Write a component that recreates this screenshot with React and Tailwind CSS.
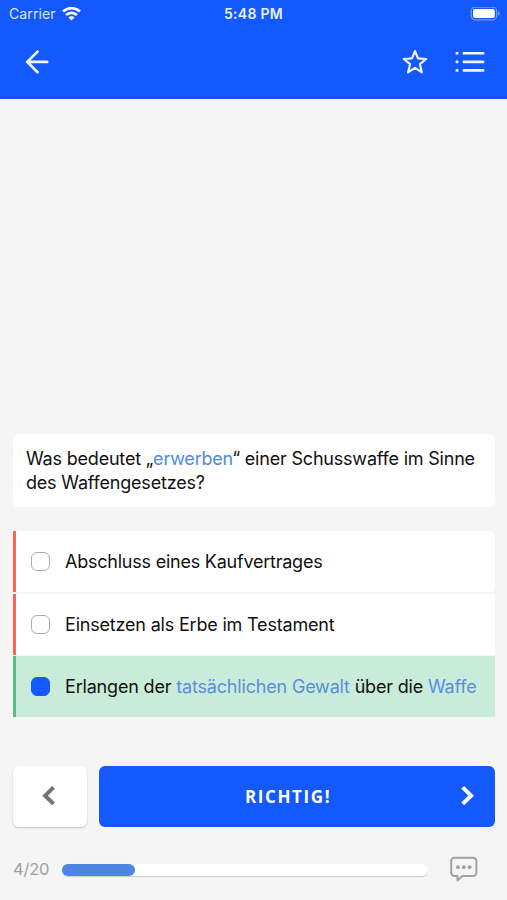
import React from "react";

function StatusBar() {
  return (
    <div className="grid h-[27px] grid-cols-3 items-center pl-[9px] pr-[7px] text-white">
      <div className="flex items-center gap-[6px]">
        <span className="text-[14px] leading-[27px] tracking-[0.1px] text-[#d9e5ff]">Carrier</span>
        <svg width="19" height="14" viewBox="0 0 19 14" fill="none" stroke="currentColor" strokeWidth="2.7">
          <path d="M1 4.6a12.3 12.3 0 0 1 17 0" />
          <path d="M4.1 8a7.8 7.8 0 0 1 10.8 0" />
          <path d="M9.5 13.6 6.5 10.6a4.2 4.2 0 0 1 6 0Z" fill="currentColor" stroke="none" />
        </svg>
      </div>
      <span className="pr-[2px] pt-px text-center text-[14px] font-semibold leading-[26px] tracking-[0.3px] text-[#e8efff]">5:48 PM</span>
      <svg className="justify-self-end" width="30" height="14" viewBox="0 0 30 14">
        <rect x="1.2" y="0.2" width="25.4" height="12.6" rx="3.8" fill="none" stroke="#719cff" strokeWidth="1.2" />
        <rect x="3" y="2" width="21.8" height="9" rx="2" fill="#fff" />
        <path d="M27.9 4.3c2.4.8 2.4 3.6 0 4.4Z" fill="#719cff" />
      </svg>
    </div>
  );
}

function NavBar() {
  return (
    <div className="flex h-[69px] items-center justify-between pl-[25px] pr-[22px] text-white">
      <svg width="24" height="26" viewBox="0 0 24 26" fill="none" stroke="#f2f6ff" strokeWidth="2.7" strokeLinecap="round" strokeLinejoin="round">
        <path d="M12.6 2.6 2.2 12.9l10.4 10.3M2.2 12.9h20" />
      </svg>
      <div className="flex items-center gap-[27px]">
        <svg width="26" height="26" viewBox="0 0 26 26" fill="none" stroke="#eef3ff" strokeWidth="2.2" strokeLinejoin="round">
          <path d="m13 2.1 3 7.3 8.2.6-6.3 5.2 2 8.1-6.9-4.4-6.9 4.4 2-8.1L1.8 10l8.2-.6Z" />
        </svg>
        <svg width="30" height="26" viewBox="0 0 30 26" fill="#f2f6ff">
          <rect x="0.6" y="2.9" width="2.8" height="2.7" rx="0.6" />
          <rect x="0.6" y="11.5" width="2.8" height="2.7" rx="0.6" />
          <rect x="0.6" y="20.1" width="2.8" height="2.7" rx="0.6" />
          <rect x="7.6" y="2.9" width="21.8" height="2.7" rx="1.2" />
          <rect x="7.6" y="11.5" width="21.8" height="2.7" rx="1.2" />
          <rect x="7.6" y="20.1" width="21.8" height="2.7" rx="1.2" />
        </svg>
      </div>
    </div>
  );
}

function Answer({ checked, className, children }) {
  return (
    <div className={"flex items-center border-l-[3px] pl-[15px] " + className}>
      <span className={"size-[19px] shrink-0 rounded-[6px] border-[1.5px] " + (checked ? "border-[#1459ff] bg-[#1459ff]" : "border-[#acacac] bg-white")} />
      <span className="ml-[15px] whitespace-nowrap text-[18px] leading-[25px]">{children}</span>
    </div>
  );
}

export default function App() {
  return (
    <div className="flex h-[900px] w-[507px] flex-col overflow-hidden bg-[#f5f5f5] font-['Inter','Liberation_Sans',sans-serif] text-[#111]">
      <header className="h-[98.5px] shrink-0 bg-[#1459ff]">
        <StatusBar />
        <NavBar />
      </header>

      <main className="flex flex-1 flex-col justify-end pl-[13px] pr-[12px]">
        <div className="h-[73px] rounded-[6px] bg-white pl-[13px] pt-[13px] text-[18px] leading-[24px]">
          <p className="whitespace-nowrap tracking-[-0.2px]">
            Was bedeutet „<span className="text-[#5089e6]">erwerben</span>“ einer Schusswaffe im Sinne
          </p>
          <p className="whitespace-nowrap tracking-[-0.2px]">des Waffengesetzes?</p>
        </div>

        <div className="mt-[24px]">
          <Answer className="h-[61px] rounded-r-[6px] border-[#ff6352] bg-white tracking-[-0.23px]">Abschluss eines Kaufvertrages</Answer>
          <Answer className="mt-[2px] h-[61px] border-[#ff6352] bg-white tracking-[-0.19px]">Einsetzen als Erbe im Testament</Answer>
          <Answer checked className="mt-px h-[61px] border-[#55bf86] bg-[#c9ecda] tracking-[-0.18px]">
            Erlangen der <span className="text-[#5b8de0]">tatsächlichen Gewalt</span> über die <span className="text-[#5b8de0]">Waffe</span>
          </Answer>
        </div>

        <div className="mt-[49px] flex gap-[12px]">
          <button className="flex h-[61px] w-[74px] items-center justify-center rounded-[6px] bg-white pb-[2px] pr-[2px] shadow-[0_1px_2px_rgba(0,0,0,0.2)]">
            <svg width="14" height="20" viewBox="0 0 14 20" fill="none" stroke="#737373" strokeWidth="4">
              <path d="M11.5 1.4 3.1 9.7l8.4 8.2" />
            </svg>
          </button>
          <button className="flex h-[61px] flex-1 items-center justify-between rounded-[6px] bg-[#1459ff] pl-[146px] pr-[20px] text-white">
            <span className="pt-px font-['Open_Sans',sans-serif] text-[17px] font-bold tracking-[1.6px]">RICHTIG!</span>
            <svg className="mb-[2px]" width="14" height="20" viewBox="0 0 14 20" fill="none" stroke="#fff" strokeWidth="4">
              <path d="m1.7 1.4 8.4 8.3-8.4 8.2" />
            </svg>
          </button>
        </div>
      </main>

      <footer className="flex h-[73px] shrink-0 items-center pl-[13px] pr-[29px] pt-[12px]">
        <span className="w-[49px] text-[16.5px] tracking-[-0.2px] text-[#a0a0a0]">4/20</span>
        <div className="h-[12px] w-[366px] rounded-full bg-white shadow-[0_1px_1px_rgba(0,0,0,0.18)]">
          <div className="h-full w-1/5 rounded-full bg-[#4a86e2]" />
        </div>
        <svg className="ml-auto" width="28" height="28" viewBox="0 0 28 28" fill="none" stroke="#a0a0a0" strokeWidth="1.9" strokeLinejoin="round">
          <path d="M4.4 1.8h18.8a3.2 3.2 0 0 1 3.2 3.2v11.8a3.2 3.2 0 0 1-3.2 3.2H12.5L7.5 24.6V20H4.4a3.2 3.2 0 0 1-3.2-3.2V5a3.2 3.2 0 0 1 3.2-3.2Z" />
          <g fill="#a0a0a0" stroke="none">
            <circle cx="8" cy="11.2" r="1.9" />
            <circle cx="13.8" cy="11.2" r="1.9" />
            <circle cx="19.6" cy="11.2" r="1.9" />
          </g>
        </svg>
      </footer>
    </div>
  );
}
